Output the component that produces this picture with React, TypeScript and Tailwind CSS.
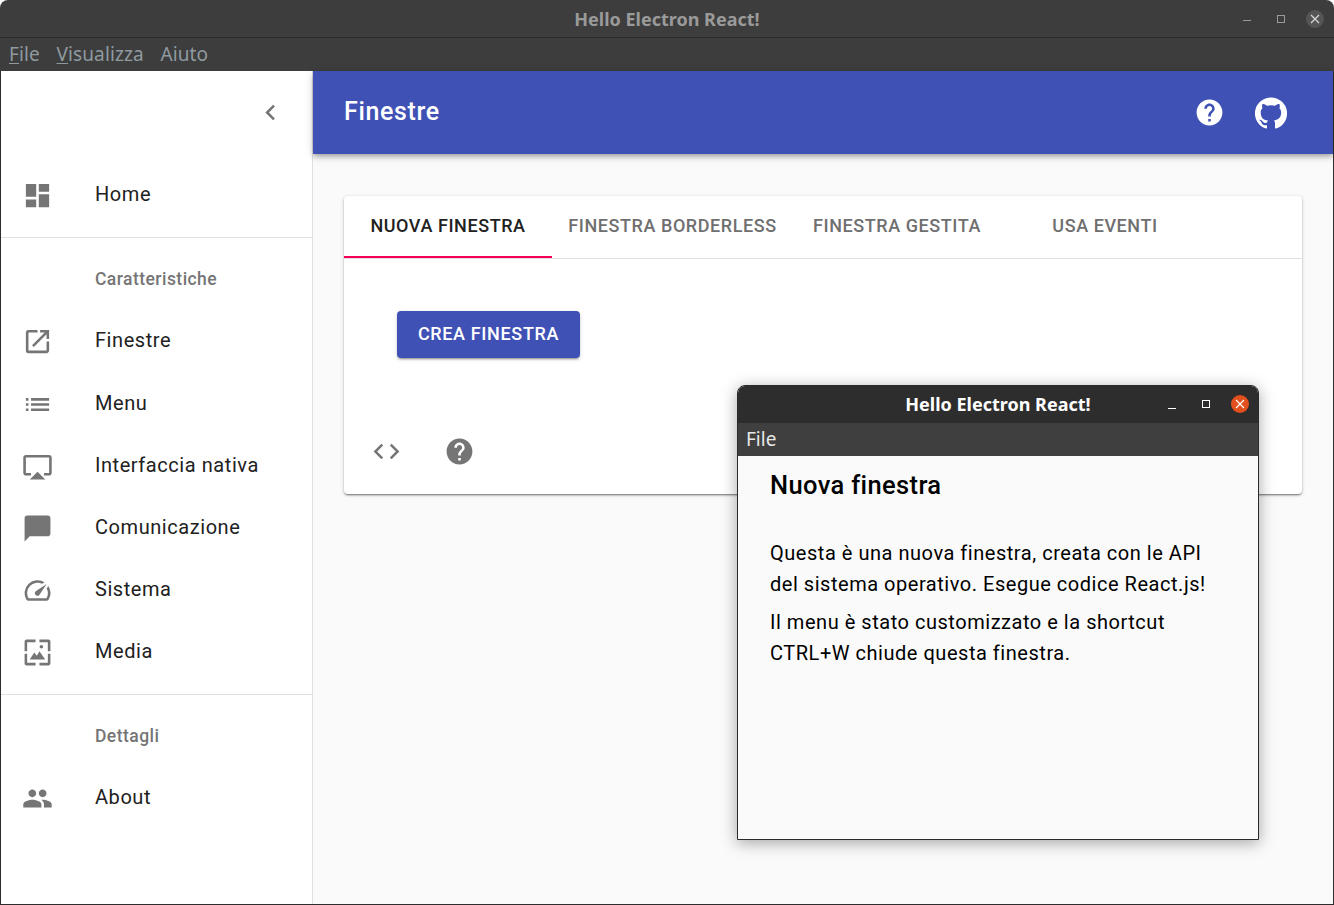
import type { ReactNode } from "react";
import {
  MdAirplay,
  MdChatBubble,
  MdChevronLeft,
  MdCode,
  MdDashboard,
  MdHelp,
  MdList,
  MdOpenInNew,
  MdPeople,
  MdSpeed,
} from "react-icons/md";

const MediaIcon = () => (
  <svg viewBox="0 0 24 24" width={31} height={31} fill="currentColor">
    <path d="M3.5 2h7v2H4v7H2V3.5C2 2.7 2.7 2 3.5 2zM13.5 2h7c.8 0 1.500.7 1.500 1.500V11h-2V4h-6.500V2zM2 13h2v7h6.500v2h-7C2.700 22 2 21.300 2 20.500V13zM20 13h2v7.500c0 .8-.7 1.500-1.500 1.500h-7v-2H20v-7z" />
    <circle cx="15" cy="7.500" r="1.400" />
    <path d="M6 17.500l3.500-5.500 2 2.500 2-3.500 4.500 6.500H6z" />
  </svg>
);

const GithubIcon = () => (
  <svg viewBox="0 0 24 24" width={32} height={32} fill="currentColor">
    <path d="M12 .3a12 12 0 0 0-3.800 23.400c.6.1.8-.3.8-.6v-2c-3.300.7-4-1.600-4-1.600-.6-1.400-1.400-1.800-1.400-1.800-1-.7.1-.7.1-.7 1.200 0 1.900 1.200 1.900 1.200 1 1.800 2.800 1.300 3.500 1 0-.8.4-1.300.7-1.600-2.700-.3-5.500-1.300-5.500-6 0-1.200.5-2.300 1.300-3.100-.2-.4-.6-1.600 0-3.200 0 0 1-.3 3.400 1.200a11.500 11.500 0 0 1 6 0c2.300-1.500 3.300-1.200 3.300-1.200.6 1.600.2 2.800 0 3.200.9.8 1.300 1.900 1.300 3.200 0 4.600-2.800 5.600-5.500 5.900.5.4.9 1 .9 2.200v3.300c0 .3.1.7.8.6A12 12 0 0 0 12 .3" />
  </svg>
);

const NavItem = ({ icon, label, tall }: { icon: ReactNode; label: string; tall?: boolean }) => (
  <div className={`flex items-center pl-[21px] ${tall ? "h-[63px]" : "h-[62px]"}`}>
    <div className="flex w-[73px] shrink-0 pt-[2px] text-[#757575]">{icon}</div>
    <span className={`text-[20px] tracking-[0.56px] text-[#212121] ${tall ? "pb-[2px]" : ""}`}>{label}</span>
  </div>
);

const SectionTitle = ({ label }: { label: string }) => (
  <div className="mt-3 flex h-[59px] items-center pl-[94px] text-[17.5px] font-medium tracking-[0.45px] text-[#757575]">
    {label}
  </div>
);

const Divider = () => <div className="h-px bg-[#e0e0e0]" />;

const Tab = ({ label, active, className }: { label: string; active?: boolean; className: string }) => (
  <div
    className={`flex h-[62px] items-center justify-center text-[18px] font-medium tracking-[0.57px] ${className} ${
      active ? "border-b-2 border-[#f50057] pb-[2px] text-[#212121]" : "pb-[4px] text-[#6f6f6f]"
    }`}
  >
    {label}
  </div>
);

const Sidebar = () => (
  <aside className="w-[312px] shrink-0 border-r border-[#e0e0e0] bg-white">
    <div className="flex h-[83px] items-center justify-end pr-[26px] text-[#757575]">
      <MdChevronLeft size={31} />
    </div>
    <div className="pt-[9px] pb-3">
      <NavItem icon={<MdDashboard size={31} />} label="Home" />
    </div>
    <Divider />
    <SectionTitle label="Caratteristiche" />
    <div className="pb-3">
      <NavItem icon={<MdOpenInNew size={31} />} label="Finestre" tall />
      <NavItem icon={<MdList size={31} />} label="Menu" />
      <NavItem icon={<MdAirplay size={31} />} label="Interfaccia nativa" />
      <NavItem icon={<MdChatBubble size={31} />} label="Comunicazione" />
      <NavItem icon={<MdSpeed size={31} />} label="Sistema" />
      <NavItem icon={<MediaIcon />} label="Media" />
    </div>
    <Divider />
    <SectionTitle label="Dettagli" />
    <NavItem icon={<MdPeople size={31} />} label="About" />
  </aside>
);

const Content = () => (
  <main className="flex min-w-0 flex-1 flex-col bg-[#fafafa]">
    <header className="z-10 flex h-[83px] shrink-0 items-center justify-between bg-[#3f51b5] pr-[46px] pl-[31px] text-white shadow-[0_2px_4px_-1px_rgba(0,0,0,0.2),0_4px_5px_0_rgba(0,0,0,0.14),0_1px_10px_0_rgba(0,0,0,0.12)]">
      <h1 className="pb-[2px] text-[25px] font-medium tracking-[0.65px]">Finestre</h1>
      <div className="flex items-center gap-[30px]">
        <MdHelp size={31} />
        <GithubIcon />
      </div>
    </header>
    <div className="px-[31px] pt-[42px]">
      <section className="h-[298px] rounded-[4px] bg-white shadow-[0_2px_2px_-1px_rgba(0,0,0,0.35),0_1px_2px_0_rgba(0,0,0,0.2),0_1px_4px_0_rgba(0,0,0,0.15)]">
        <div className="flex h-[63px] border-b border-[#e0e0e0]">
          <Tab label="NUOVA FINESTRA" active className="w-[208px]" />
          <Tab label="FINESTRA BORDERLESS" className="w-[241px]" />
          <Tab label="FINESTRA GESTITA" className="w-[208px]" />
          <Tab label="USA EVENTI" className="w-[208px]" />
        </div>
        <div className="pt-[52px] pl-[53px]">
          <button className="flex h-[47px] w-[183px] items-center justify-center rounded-[4px] bg-[#3f51b5] pb-[2px] text-[18px] font-medium tracking-[0.65px] text-white shadow-[0_3px_1px_-2px_rgba(0,0,0,0.2),0_2px_2px_0_rgba(0,0,0,0.14),0_1px_5px_0_rgba(0,0,0,0.12)]">
            CREA FINESTRA
          </button>
        </div>
        <div className="flex items-center gap-[42px] pt-[78px] pl-[27px] text-[#757575]">
          <MdCode size={31} />
          <MdHelp size={31} />
        </div>
      </section>
    </div>
  </main>
);

const ChildWindow = () => (
  <div className="absolute top-[385px] left-[737px] z-20 flex h-[455px] w-[522px] flex-col overflow-hidden rounded-t-[8px] border border-[#2a2a2a] bg-[#fafafa] shadow-[0_3px_16px_rgba(0,0,0,0.35)]">
    <div className="relative flex h-[37px] shrink-0 items-center justify-center bg-[#2d2d2d] font-['Noto_Sans',sans-serif] text-[18px] font-bold text-white">
      Hello Electron React!
      <div className="absolute top-[9px] right-[9px] flex items-center">
        <div className="mt-[9px] mr-[26px] h-px w-2 bg-white" />
        <div className="mr-[21px] h-2 w-2 border border-white" />
        <div className="flex h-[18px] w-[18px] items-center justify-center rounded-full bg-[#e2501e]">
          <svg viewBox="0 0 10 10" width={10} height={10} stroke="white" strokeWidth={1.2}>
            <path d="M1 1l8 8M9 1l-8 8" />
          </svg>
        </div>
      </div>
    </div>
    <div className="flex h-[33px] shrink-0 items-center bg-[#3f3f3f] pl-2 font-['Noto_Sans',sans-serif] text-[19px] text-[#e8e8e8]">
      File
    </div>
    <div className="pt-[12px] pl-[32px] text-black">
      <h2 className="text-[25.5px] leading-[34px] font-medium tracking-[0.36px]">Nuova finestra</h2>
      <p className="mt-[36px] text-[20px] leading-[31px] tracking-[0.53px]">
        Questa è una nuova finestra, creata con le API
        <br />
        del sistema operativo. Esegue codice React.js!
      </p>
      <p className="mt-[7px] text-[20px] leading-[31px] tracking-[0.53px]">
        Il menu è stato customizzato e la shortcut
        <br />
        CTRL+W chiude questa finestra.
      </p>
    </div>
  </div>
);

const App = () => (
  <div className="relative flex h-[905px] w-[1334px] flex-col overflow-hidden rounded-t-[8px] bg-white font-['Roboto',sans-serif]">
    <div className="relative flex h-[38px] shrink-0 items-center justify-center border-b border-[#2a2a2a] bg-[#3d3d3d] pt-[1px] font-['Noto_Sans',sans-serif] text-[18px] font-bold text-[#9a9a9a]">
      Hello Electron React!
      <div className="absolute top-0 right-[10px] flex h-full items-center">
        <div className="mt-[4px] mr-[26px] h-px w-2 bg-[#9a9a9a]" />
        <div className="mr-[21px] h-2 w-2 border border-[#9a9a9a]" />
        <div className="flex h-[18px] w-[18px] items-center justify-center rounded-full bg-[#555555]">
          <svg viewBox="0 0 10 10" width={10} height={10} stroke="#d8d8d8" strokeWidth={1.2}>
            <path d="M1 1l8 8M9 1l-8 8" />
          </svg>
        </div>
      </div>
    </div>
    <div className="flex h-[33px] shrink-0 items-center gap-[16.6px] bg-[#3d3d3d] pl-[9px] font-['Noto_Sans',sans-serif] text-[19px] tracking-[0.12px] text-[#8f9aa0]">
      <span>
        <span className="underline underline-offset-2">F</span>ile
      </span>
      <span>
        <span className="underline underline-offset-2">V</span>isualizza
      </span>
      <span>Aiuto</span>
    </div>
    <div className="flex min-h-0 flex-1 border-x border-b border-[#2d2d2d]">
      <Sidebar />
      <Content />
    </div>
    <ChildWindow />
  </div>
);

export default App;
